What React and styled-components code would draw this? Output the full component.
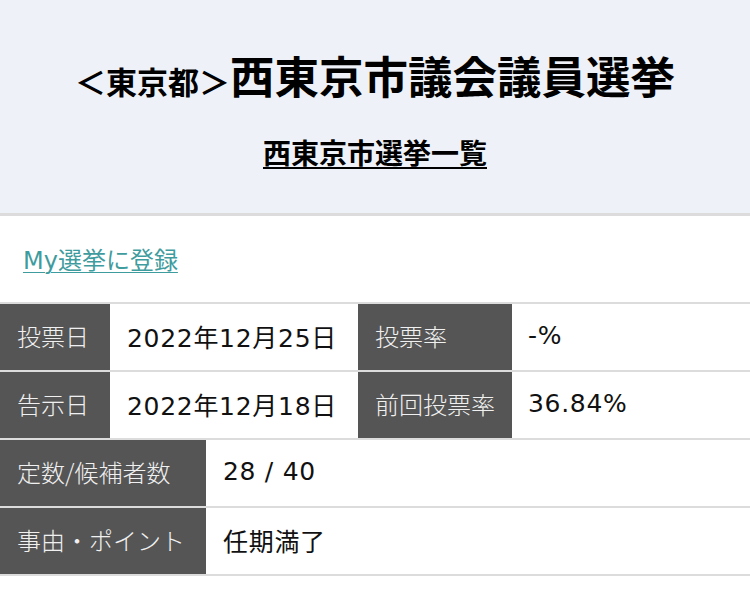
import React from 'react';
import styled, { createGlobalStyle } from 'styled-components';

const GlobalStyle = createGlobalStyle`
  html, body {
    margin: 0;
    padding: 0;
    background: #fff;
    font-family: "DejaVu Sans", "Noto Sans CJK JP", sans-serif;
    color: #111;
  }
`;

const Header = styled.header`
  height: 216px;
  box-sizing: border-box;
  background: #eef2f8;
  border-bottom: 3px solid #dcdcdc;
  display: flex;
  flex-direction: column;
  align-items: center;
  padding-top: 48px;
`;

const Title = styled.h1`
  margin: 0;
  font-family: "Noto Sans CJK JP", sans-serif;
  font-weight: 700;
  font-size: 44.5px;
  line-height: 53px;
  color: #000;
  white-space: nowrap;
`;

const Pref = styled.span`
  font-size: 31px;
`;

const SubLink = styled.a`
  margin-top: 28px;
  font-family: "Noto Sans CJK JP", sans-serif;
  font-weight: 700;
  font-size: 28px;
  line-height: 34px;
  color: #000;
  text-decoration: underline;
  text-decoration-thickness: 2px;
  text-underline-offset: 3px;
`;

const LinkBar = styled.div`
  height: 86px;
  box-sizing: border-box;
  padding: 29px 23px 0;
`;

const MyLink = styled.a`
  font-size: 24px;
  line-height: 32px;
  color: #3f9c9e;
  text-decoration: underline;
  text-decoration-thickness: 1px;
  text-underline-offset: 3px;
`;

const Table = styled.div`
  border-top: 2px solid #dcdcdc;
`;

const Row = styled.div`
  display: grid;
  grid-template-columns: ${p => p.$cols};
  height: 68px;
  box-sizing: border-box;
  border-bottom: 2px solid #dcdcdc;
`;

const Label = styled.div`
  display: flex;
  align-items: center;
  padding: 0 0 4px 17px;
  background: #555;
  color: #f0f0f0;
  font-family: "Noto Sans CJK JP", sans-serif;
  font-weight: 300;
  font-size: 24px;
  white-space: nowrap;
`;

const Value = styled.div`
  display: flex;
  align-items: center;
  padding: 0 0 3px ${p => p.$pad || 17}px;
  background: #fff;
  color: #111;
  font-size: 25px;
  letter-spacing: 0.7px;
  white-space: nowrap;
`;

const WIDE = '110px 248px 154px 1fr';
const NARROW = '206px 1fr';

export default function App() {
  return (
    <>
      <GlobalStyle />
      <Header>
        <Title><Pref>＜東京都＞</Pref>西東京市議会議員選挙</Title>
        <SubLink href="#">西東京市選挙一覧</SubLink>
      </Header>

      <LinkBar>
        <MyLink href="#">My選挙に登録</MyLink>
      </LinkBar>

      <Table>
        <Row $cols={WIDE}>
          <Label>投票日</Label>
          <Value>2022年12月25日</Value>
          <Label>投票率</Label>
          <Value $pad={16}>-%</Value>
        </Row>
        <Row $cols={WIDE}>
          <Label>告示日</Label>
          <Value>2022年12月18日</Value>
          <Label>前回投票率</Label>
          <Value $pad={16}>36.84%</Value>
        </Row>
        <Row $cols={NARROW}>
          <Label>定数/候補者数</Label>
          <Value>28 / 40</Value>
        </Row>
        <Row $cols={NARROW}>
          <Label>事由・ポイント</Label>
          <Value>任期満了</Value>
        </Row>
      </Table>
    </>
  );
}
